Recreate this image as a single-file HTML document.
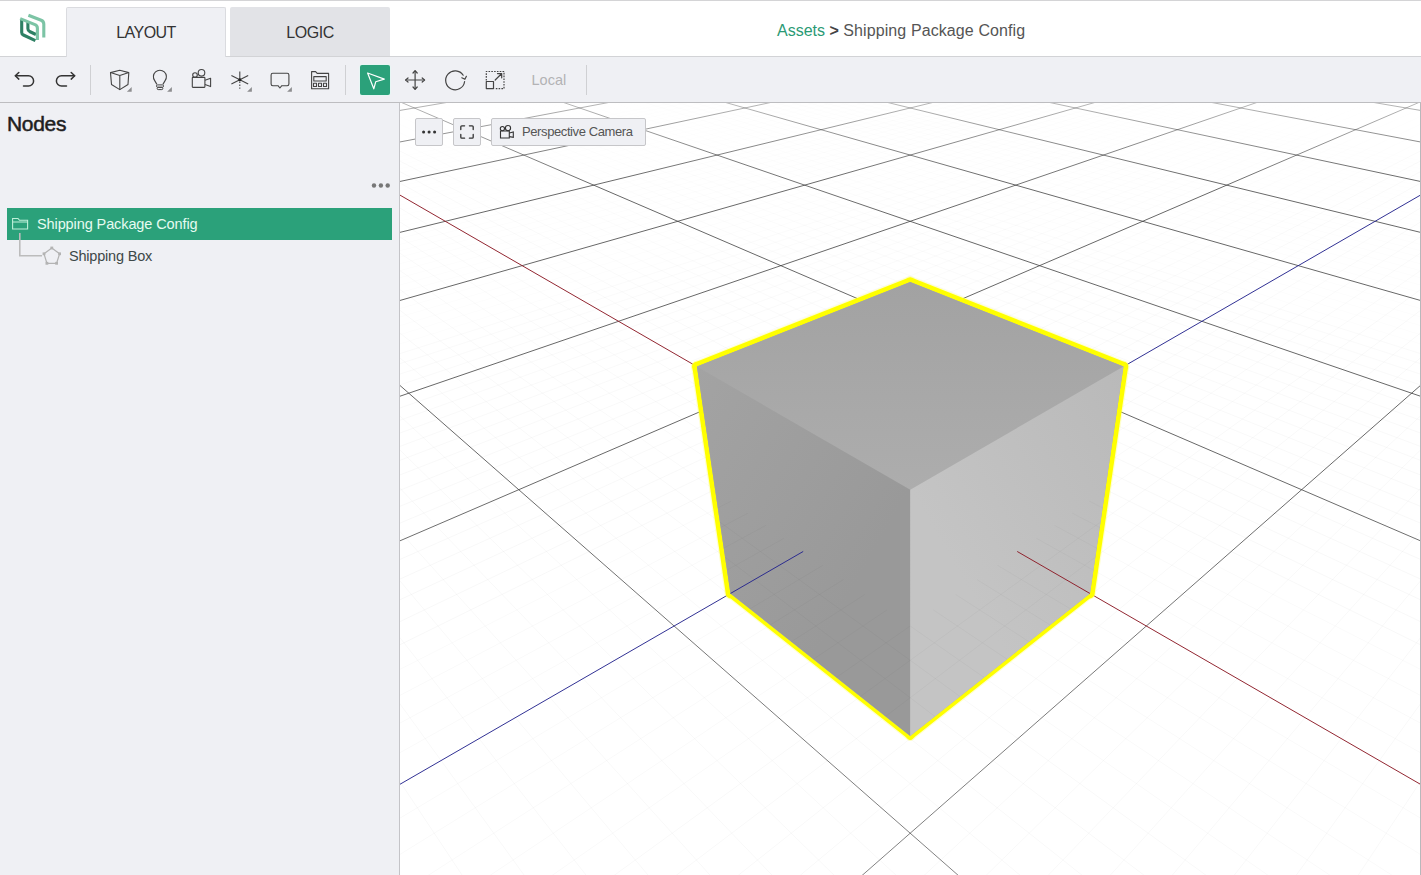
<!DOCTYPE html>
<html><head><meta charset="utf-8">
<style>
*{box-sizing:border-box;margin:0;padding:0}
html,body{width:1421px;height:875px;overflow:hidden;background:#fff;font-family:"Liberation Sans",sans-serif}
.abs{position:absolute}
#header{position:absolute;left:0;top:0;width:1421px;height:57px;background:#fff;border-top:1px solid #d4d4d6}
#toolbar{position:absolute;left:0;top:56px;width:1421px;height:47px;background:#eff0f4;border-top:1px solid #d2d3d6;border-bottom:1px solid #bdbdc0}
.tab{position:absolute;top:6px;height:50px;font-size:16px;color:#333;text-align:center;line-height:50px;border-radius:2px 2px 0 0}
#tab1{left:66px;width:160px;background:#eff0f4;border:1px solid #dadbdf;border-bottom:none;z-index:2}
#tab2{left:230px;width:160px;height:49px;background:#e2e3e7}
.crumb{position:absolute;top:21px;font-size:16px;white-space:nowrap}
#left{position:absolute;left:0;top:103px;width:400px;height:772px;background:#eff0f4;border-right:1px solid #c4c4c8}
#view{position:absolute;left:400px;top:103px;width:1021px;height:772px;background:#fff;overflow:hidden}
#vborder{position:absolute;left:1420px;top:103px;width:1px;height:772px;background:#b8b8bb}
.sep{position:absolute;top:65px;width:1px;height:30px;background:#cfd0d3}
.vbtn{position:absolute;top:15px;height:28px;background:#eff0f4;border:1px solid #c6c6c9;border-radius:2px}
svg{overflow:visible}
</style></head><body>
<div id="header">
  <svg class="abs" style="left:0;top:0" width="60" height="56" viewBox="0 0 60 56">
    <g fill="none" stroke-width="3.1" stroke-linejoin="round" stroke-linecap="butt">
      <path d="M21.7 19 L21.7 31.4 Q21.7 33.2 23.4 34 L35.4 39.6" stroke="#2e8064"/>
      <path d="M27.9 20.4 L27.9 27.8 Q27.9 29.6 29.6 30.5 L35.9 33.5" stroke="#2e8064"/>
      <path d="M28.4 14.2 L41.2 19.3 Q43.8 20.3 43.8 23 L43.8 36.4" stroke="#7cc4a5"/>
      <path d="M20.2 17.6 L35 23.6 Q37.4 24.6 37.4 27.2 L37.4 39" stroke="#7cc4a5"/>
    </g>
  </svg>
  <div id="tab1" class="tab" style="letter-spacing:-0.55px;line-height:50px">LAYOUT</div>
  <div id="tab2" class="tab" style="letter-spacing:-0.45px;line-height:51px">LOGIC</div>
  <div class="crumb" style="left:777px"><span style="color:#2a9a74">Assets</span> <b style="color:#444">&gt;</b> <span style="color:#555;letter-spacing:0.1px">Shipping Package Config</span></div>
</div>
<div id="toolbar"></div>
<!-- toolbar icons -->
<svg class="abs" style="left:0;top:56px" width="600" height="47" viewBox="0 56 600 47">
  <g fill="none" stroke="#333" stroke-width="1.5" stroke-linecap="round" stroke-linejoin="round">
    <!-- undo -->
    <path d="M15.5 75.8 H28.5 A5.1 5.1 0 0 1 28.5 86 H23.5"/>
    <path d="M18.8 72.5 L15.3 75.8 L18.8 79.1"/>
    <!-- redo -->
    <path d="M74.5 75.8 H61.5 A5.1 5.1 0 0 0 61.5 86 H66.5"/>
    <path d="M71.2 72.5 L74.7 75.8 L71.2 79.1"/>
  </g>
  <rect x="90" y="65" width="1" height="30" fill="#cfd0d3"/>
  <g fill="none" stroke="#444" stroke-width="1.1" stroke-linejoin="round">
    <!-- cube -->
    <path d="M110.5 72.6 L119.8 70.3 L128.8 72.6 L128 84.5 L119.8 89.6 L111.5 84.5 Z"/>
    <path d="M110.5 72.6 L119.8 75.6 L128.8 72.6 M119.8 75.6 L119.8 89.6"/>
    <!-- bulb -->
    <path d="M156.9 84.4 L154.7 80.6 A6.5 6.5 0 1 1 165.1 80.6 L162.9 84.4"/>
    <rect x="156.5" y="84.9" width="7" height="2.3" rx="1" stroke-width="1"/>
    <rect x="157.2" y="87.4" width="5.6" height="2.2" rx="1" stroke-width="1"/>
    <!-- camera -->
    <rect x="192.3" y="77.4" width="12.6" height="10" rx="0.6"/>
    <path d="M205 80.2 L210.6 78.2 L210.6 86.6 L205 84.6"/>
    <circle cx="195" cy="75" r="2.3"/>
    <circle cx="201.5" cy="72.8" r="3.3"/>
    <!-- light star -->
    <path d="M239.8 71.4 V79.7 M231.4 75.5 L248.2 84 M231.4 84 L248.2 75.5"/>
    <path d="M239.8 81.5 V88.8" stroke-dasharray="1.6 1.4"/>
    <!-- speech -->
    <path d="M272.8 73.2 H287.2 Q288.9 73.2 288.9 75 V84 Q288.9 85.7 287.2 85.7 H281.8 L279.9 88 L278 85.7 H272.8 Q271.1 85.7 271.1 84 V75 Q271.1 73.2 272.8 73.2 Z"/>
    <!-- film -->
    <path d="M311.6 88.7 V71.6 H315.6 L317.2 73.4 H328.6 V88.7 Z"/>
    <rect x="313.8" y="76.6" width="12.4" height="4.4"/>
    <rect x="313.5" y="83.3" width="3" height="3.2"/>
    <rect x="318.5" y="83.3" width="3" height="3.2"/>
    <rect x="323.5" y="83.3" width="3" height="3.2"/>
  </g>
  <g fill="#8e8e90">
    <path d="M126.9 91.8 L131.7 87 L131.7 91.8 Z"/>
    <path d="M167.1 91.8 L171.9 87 L171.9 91.8 Z"/>
    <path d="M247.1 91.8 L251.9 87 L251.9 91.8 Z"/>
    <path d="M287.1 91.8 L291.9 87 L291.9 91.8 Z"/>
  </g>
  <circle cx="239.8" cy="79.7" r="1.5" fill="#222"/>
  <rect x="345" y="65" width="1" height="30" fill="#cfd0d3"/>
  <!-- select button -->
  <rect x="359.5" y="64.5" width="31" height="31" rx="2.5" fill="#dffcf3"/>
  <rect x="360" y="65" width="30" height="30" rx="2" fill="#2ba17a"/>
  <path d="M367.6 73 L384.3 79.1 L375.7 81.8 L373.8 88.8 Z" fill="none" stroke="#fff" stroke-width="1.2" stroke-linejoin="round"/>
  <g fill="none" stroke="#444" stroke-width="1.2" stroke-linejoin="round" stroke-linecap="round">
    <!-- move -->
    <path d="M415.1 71 V89 M406 80 H424.2"/>
    <path d="M413 73 L415.1 70.6 L417.2 73 M413 87 L415.1 89.4 L417.2 87 M408 78 L405.6 80 L408 82 M422.2 78 L424.6 80 L422.2 82"/>
    <!-- rotate -->
    <path d="M463.2 75.2 A9.5 9.5 0 1 0 464.6 81.5"/>
    <path d="M461.8 77.8 L464.9 79.3 L466.4 76.3"/>
    <!-- scale -->
    <path d="M486.3 80.5 V71.5 H504 V88.6 H494.5" stroke-dasharray="1.6 1.2" stroke-linecap="butt"/>
    <rect x="486.3" y="81.5" width="7.2" height="7.1"/>
    <path d="M495.2 80 L501.5 73.8 M497.5 73.6 H501.7 V77.8"/>
  </g>
  <text x="531.5" y="85.3" font-family="Liberation Sans" font-size="14.5" fill="#b3b3b5">Local</text>
  <rect x="586" y="65" width="1" height="30" fill="#cfd0d3"/>
</svg>
<div id="left">
  <div class="abs" style="left:7px;top:9px;font-size:21px;color:#1e1e1e;letter-spacing:-0.3px;-webkit-text-stroke:0.5px #1e1e1e">Nodes</div>
  <svg class="abs" style="left:360px;top:76px" width="40" height="20">
    <circle cx="14" cy="6.5" r="2.2" fill="#777"/><circle cx="20.9" cy="6.5" r="2.2" fill="#777"/><circle cx="27.7" cy="6.5" r="2.2" fill="#777"/>
  </svg>
  <div class="abs" style="left:7px;top:105px;width:385px;height:32px;background:#2ba17a"></div>
  <div class="abs" style="left:37px;top:113px;font-size:14.5px;color:#e6fbf1;white-space:nowrap;letter-spacing:-0.1px">Shipping Package Config</div>
  <div class="abs" style="left:69px;top:145px;font-size:14.5px;color:#3d4848;white-space:nowrap;letter-spacing:-0.2px">Shipping Box</div>
  <svg class="abs" style="left:0;top:0" width="400" height="200" viewBox="0 103 400 200">
    <g fill="none" stroke="#bff0d9" stroke-width="1.1">
      <path d="M12.6 229 V218.5 H18 L19.5 220.3 H27.6 V229 Z M12.6 222 H27.6"/>
    </g>
    <path d="M19.8 233 V255.7 H42" fill="none" stroke="#bcbcbc" stroke-width="1.6"/>
    <g fill="none" stroke="#b3b3b3" stroke-width="1.2">
      <path d="M51.8 248 L59.6 253.8 L56.6 263.3 L46.9 263.3 L44 253.8 Z"/>
    </g>
    <g fill="#b3b3b3">
      <rect x="50.4" y="246.6" width="2.8" height="2.8"/><rect x="58.2" y="252.4" width="2.8" height="2.8"/>
      <rect x="55.2" y="261.9" width="2.8" height="2.8"/><rect x="45.5" y="261.9" width="2.8" height="2.8"/>
      <rect x="42.6" y="252.4" width="2.8" height="2.8"/>
    </g>
  </svg>
</div>
<div id="view">
<svg width="1020" height="772" viewBox="0 0 1020 772" style="position:absolute;left:0;top:0;display:block"><defs><linearGradient id="g1" gradientUnits="userSpaceOnUse" x1="806.12" y1="-5.00" x2="-5.00" y2="252.18"><stop offset="0.000" stop-color="#000" stop-opacity="0.002"/><stop offset="0.200" stop-color="#000" stop-opacity="0.008"/><stop offset="0.400" stop-color="#000" stop-opacity="0.013"/><stop offset="0.600" stop-color="#000" stop-opacity="0.017"/><stop offset="0.800" stop-color="#000" stop-opacity="0.019"/><stop offset="1.000" stop-color="#000" stop-opacity="0.022"/></linearGradient><linearGradient id="g2" gradientUnits="userSpaceOnUse" x1="214.28" y1="-5.00" x2="1025.00" y2="252.05"><stop offset="0.000" stop-color="#000" stop-opacity="0.002"/><stop offset="0.200" stop-color="#000" stop-opacity="0.008"/><stop offset="0.400" stop-color="#000" stop-opacity="0.013"/><stop offset="0.600" stop-color="#000" stop-opacity="0.017"/><stop offset="0.800" stop-color="#000" stop-opacity="0.019"/><stop offset="1.000" stop-color="#000" stop-opacity="0.022"/></linearGradient><linearGradient id="g3" gradientUnits="userSpaceOnUse" x1="822.06" y1="-5.00" x2="-5.00" y2="262.25"><stop offset="0.000" stop-color="#000" stop-opacity="0.002"/><stop offset="0.200" stop-color="#000" stop-opacity="0.008"/><stop offset="0.400" stop-color="#000" stop-opacity="0.013"/><stop offset="0.600" stop-color="#000" stop-opacity="0.017"/><stop offset="0.800" stop-color="#000" stop-opacity="0.020"/><stop offset="1.000" stop-color="#000" stop-opacity="0.022"/></linearGradient><linearGradient id="g4" gradientUnits="userSpaceOnUse" x1="198.34" y1="-5.00" x2="1025.00" y2="262.12"><stop offset="0.000" stop-color="#000" stop-opacity="0.002"/><stop offset="0.200" stop-color="#000" stop-opacity="0.008"/><stop offset="0.400" stop-color="#000" stop-opacity="0.013"/><stop offset="0.600" stop-color="#000" stop-opacity="0.017"/><stop offset="0.800" stop-color="#000" stop-opacity="0.020"/><stop offset="1.000" stop-color="#000" stop-opacity="0.022"/></linearGradient><linearGradient id="g5" gradientUnits="userSpaceOnUse" x1="838.00" y1="-5.00" x2="-5.00" y2="272.72"><stop offset="0.000" stop-color="#000" stop-opacity="0.002"/><stop offset="0.200" stop-color="#000" stop-opacity="0.009"/><stop offset="0.400" stop-color="#000" stop-opacity="0.014"/><stop offset="0.600" stop-color="#000" stop-opacity="0.017"/><stop offset="0.800" stop-color="#000" stop-opacity="0.020"/><stop offset="1.000" stop-color="#000" stop-opacity="0.023"/></linearGradient><linearGradient id="g6" gradientUnits="userSpaceOnUse" x1="182.40" y1="-5.00" x2="1025.00" y2="272.59"><stop offset="0.000" stop-color="#000" stop-opacity="0.002"/><stop offset="0.200" stop-color="#000" stop-opacity="0.009"/><stop offset="0.400" stop-color="#000" stop-opacity="0.014"/><stop offset="0.600" stop-color="#000" stop-opacity="0.017"/><stop offset="0.800" stop-color="#000" stop-opacity="0.020"/><stop offset="1.000" stop-color="#000" stop-opacity="0.023"/></linearGradient><linearGradient id="g7" gradientUnits="userSpaceOnUse" x1="853.94" y1="-5.00" x2="-5.00" y2="283.60"><stop offset="0.000" stop-color="#000" stop-opacity="0.002"/><stop offset="0.200" stop-color="#000" stop-opacity="0.009"/><stop offset="0.400" stop-color="#000" stop-opacity="0.014"/><stop offset="0.600" stop-color="#000" stop-opacity="0.018"/><stop offset="0.800" stop-color="#000" stop-opacity="0.021"/><stop offset="1.000" stop-color="#000" stop-opacity="0.023"/></linearGradient><linearGradient id="g8" gradientUnits="userSpaceOnUse" x1="166.46" y1="-5.00" x2="1025.00" y2="283.47"><stop offset="0.000" stop-color="#000" stop-opacity="0.002"/><stop offset="0.200" stop-color="#000" stop-opacity="0.009"/><stop offset="0.400" stop-color="#000" stop-opacity="0.014"/><stop offset="0.600" stop-color="#000" stop-opacity="0.018"/><stop offset="0.800" stop-color="#000" stop-opacity="0.021"/><stop offset="1.000" stop-color="#000" stop-opacity="0.023"/></linearGradient><linearGradient id="g9" gradientUnits="userSpaceOnUse" x1="885.82" y1="-5.00" x2="-5.00" y2="306.72"><stop offset="0.000" stop-color="#000" stop-opacity="0.002"/><stop offset="0.200" stop-color="#000" stop-opacity="0.009"/><stop offset="0.400" stop-color="#000" stop-opacity="0.015"/><stop offset="0.600" stop-color="#000" stop-opacity="0.019"/><stop offset="0.800" stop-color="#000" stop-opacity="0.022"/><stop offset="1.000" stop-color="#000" stop-opacity="0.024"/></linearGradient><linearGradient id="g10" gradientUnits="userSpaceOnUse" x1="134.58" y1="-5.00" x2="1025.00" y2="306.58"><stop offset="0.000" stop-color="#000" stop-opacity="0.002"/><stop offset="0.200" stop-color="#000" stop-opacity="0.009"/><stop offset="0.400" stop-color="#000" stop-opacity="0.015"/><stop offset="0.600" stop-color="#000" stop-opacity="0.019"/><stop offset="0.800" stop-color="#000" stop-opacity="0.022"/><stop offset="1.000" stop-color="#000" stop-opacity="0.024"/></linearGradient><linearGradient id="g11" gradientUnits="userSpaceOnUse" x1="901.75" y1="-5.00" x2="-5.00" y2="319.02"><stop offset="0.000" stop-color="#000" stop-opacity="0.002"/><stop offset="0.200" stop-color="#000" stop-opacity="0.010"/><stop offset="0.400" stop-color="#000" stop-opacity="0.015"/><stop offset="0.600" stop-color="#000" stop-opacity="0.019"/><stop offset="0.800" stop-color="#000" stop-opacity="0.022"/><stop offset="1.000" stop-color="#000" stop-opacity="0.024"/></linearGradient><linearGradient id="g12" gradientUnits="userSpaceOnUse" x1="118.65" y1="-5.00" x2="1025.00" y2="318.87"><stop offset="0.000" stop-color="#000" stop-opacity="0.002"/><stop offset="0.200" stop-color="#000" stop-opacity="0.010"/><stop offset="0.400" stop-color="#000" stop-opacity="0.015"/><stop offset="0.600" stop-color="#000" stop-opacity="0.019"/><stop offset="0.800" stop-color="#000" stop-opacity="0.022"/><stop offset="1.000" stop-color="#000" stop-opacity="0.024"/></linearGradient><linearGradient id="g13" gradientUnits="userSpaceOnUse" x1="917.69" y1="-5.00" x2="-5.00" y2="331.84"><stop offset="0.000" stop-color="#000" stop-opacity="0.002"/><stop offset="0.200" stop-color="#000" stop-opacity="0.010"/><stop offset="0.400" stop-color="#000" stop-opacity="0.015"/><stop offset="0.600" stop-color="#000" stop-opacity="0.019"/><stop offset="0.800" stop-color="#000" stop-opacity="0.022"/><stop offset="1.000" stop-color="#000" stop-opacity="0.025"/></linearGradient><linearGradient id="g14" gradientUnits="userSpaceOnUse" x1="102.71" y1="-5.00" x2="1025.00" y2="331.70"><stop offset="0.000" stop-color="#000" stop-opacity="0.002"/><stop offset="0.200" stop-color="#000" stop-opacity="0.010"/><stop offset="0.400" stop-color="#000" stop-opacity="0.015"/><stop offset="0.600" stop-color="#000" stop-opacity="0.019"/><stop offset="0.800" stop-color="#000" stop-opacity="0.022"/><stop offset="1.000" stop-color="#000" stop-opacity="0.025"/></linearGradient><linearGradient id="g15" gradientUnits="userSpaceOnUse" x1="933.63" y1="-5.00" x2="-5.00" y2="345.24"><stop offset="0.000" stop-color="#000" stop-opacity="0.002"/><stop offset="0.200" stop-color="#000" stop-opacity="0.010"/><stop offset="0.400" stop-color="#000" stop-opacity="0.016"/><stop offset="0.600" stop-color="#000" stop-opacity="0.020"/><stop offset="0.800" stop-color="#000" stop-opacity="0.023"/><stop offset="1.000" stop-color="#000" stop-opacity="0.025"/></linearGradient><linearGradient id="g16" gradientUnits="userSpaceOnUse" x1="86.77" y1="-5.00" x2="1025.00" y2="345.09"><stop offset="0.000" stop-color="#000" stop-opacity="0.002"/><stop offset="0.200" stop-color="#000" stop-opacity="0.010"/><stop offset="0.400" stop-color="#000" stop-opacity="0.016"/><stop offset="0.600" stop-color="#000" stop-opacity="0.020"/><stop offset="0.800" stop-color="#000" stop-opacity="0.023"/><stop offset="1.000" stop-color="#000" stop-opacity="0.025"/></linearGradient><linearGradient id="g17" gradientUnits="userSpaceOnUse" x1="949.57" y1="-5.00" x2="-5.00" y2="359.24"><stop offset="0.000" stop-color="#000" stop-opacity="0.001"/><stop offset="0.200" stop-color="#000" stop-opacity="0.010"/><stop offset="0.400" stop-color="#000" stop-opacity="0.016"/><stop offset="0.600" stop-color="#000" stop-opacity="0.020"/><stop offset="0.800" stop-color="#000" stop-opacity="0.023"/><stop offset="1.000" stop-color="#000" stop-opacity="0.025"/></linearGradient><linearGradient id="g18" gradientUnits="userSpaceOnUse" x1="70.83" y1="-5.00" x2="1025.00" y2="359.08"><stop offset="0.000" stop-color="#000" stop-opacity="0.001"/><stop offset="0.200" stop-color="#000" stop-opacity="0.010"/><stop offset="0.400" stop-color="#000" stop-opacity="0.016"/><stop offset="0.600" stop-color="#000" stop-opacity="0.020"/><stop offset="0.800" stop-color="#000" stop-opacity="0.023"/><stop offset="1.000" stop-color="#000" stop-opacity="0.025"/></linearGradient><linearGradient id="g19" gradientUnits="userSpaceOnUse" x1="965.51" y1="-5.00" x2="-5.00" y2="373.88"><stop offset="0.000" stop-color="#000" stop-opacity="0.001"/><stop offset="0.200" stop-color="#000" stop-opacity="0.011"/><stop offset="0.400" stop-color="#000" stop-opacity="0.016"/><stop offset="0.600" stop-color="#000" stop-opacity="0.021"/><stop offset="0.800" stop-color="#000" stop-opacity="0.023"/><stop offset="1.000" stop-color="#000" stop-opacity="0.026"/></linearGradient><linearGradient id="g20" gradientUnits="userSpaceOnUse" x1="54.89" y1="-5.00" x2="1025.00" y2="373.73"><stop offset="0.000" stop-color="#000" stop-opacity="0.001"/><stop offset="0.200" stop-color="#000" stop-opacity="0.011"/><stop offset="0.400" stop-color="#000" stop-opacity="0.016"/><stop offset="0.600" stop-color="#000" stop-opacity="0.021"/><stop offset="0.800" stop-color="#000" stop-opacity="0.023"/><stop offset="1.000" stop-color="#000" stop-opacity="0.026"/></linearGradient><linearGradient id="g21" gradientUnits="userSpaceOnUse" x1="981.45" y1="-5.00" x2="-5.00" y2="389.22"><stop offset="0.000" stop-color="#000" stop-opacity="0.002"/><stop offset="0.200" stop-color="#000" stop-opacity="0.011"/><stop offset="0.400" stop-color="#000" stop-opacity="0.017"/><stop offset="0.600" stop-color="#000" stop-opacity="0.021"/><stop offset="0.800" stop-color="#000" stop-opacity="0.024"/><stop offset="1.000" stop-color="#000" stop-opacity="0.026"/></linearGradient><linearGradient id="g22" gradientUnits="userSpaceOnUse" x1="38.95" y1="-5.00" x2="1025.00" y2="389.06"><stop offset="0.000" stop-color="#000" stop-opacity="0.002"/><stop offset="0.200" stop-color="#000" stop-opacity="0.011"/><stop offset="0.400" stop-color="#000" stop-opacity="0.017"/><stop offset="0.600" stop-color="#000" stop-opacity="0.021"/><stop offset="0.800" stop-color="#000" stop-opacity="0.024"/><stop offset="1.000" stop-color="#000" stop-opacity="0.026"/></linearGradient><linearGradient id="g23" gradientUnits="userSpaceOnUse" x1="997.38" y1="-5.00" x2="-5.00" y2="405.31"><stop offset="0.000" stop-color="#000" stop-opacity="0.002"/><stop offset="0.200" stop-color="#000" stop-opacity="0.011"/><stop offset="0.400" stop-color="#000" stop-opacity="0.017"/><stop offset="0.600" stop-color="#000" stop-opacity="0.021"/><stop offset="0.800" stop-color="#000" stop-opacity="0.024"/><stop offset="1.000" stop-color="#000" stop-opacity="0.027"/></linearGradient><linearGradient id="g24" gradientUnits="userSpaceOnUse" x1="23.02" y1="-5.00" x2="1025.00" y2="405.14"><stop offset="0.000" stop-color="#000" stop-opacity="0.002"/><stop offset="0.200" stop-color="#000" stop-opacity="0.011"/><stop offset="0.400" stop-color="#000" stop-opacity="0.017"/><stop offset="0.600" stop-color="#000" stop-opacity="0.021"/><stop offset="0.800" stop-color="#000" stop-opacity="0.024"/><stop offset="1.000" stop-color="#000" stop-opacity="0.027"/></linearGradient><linearGradient id="g25" gradientUnits="userSpaceOnUse" x1="1013.32" y1="-5.00" x2="-5.00" y2="422.19"><stop offset="0.000" stop-color="#000" stop-opacity="0.002"/><stop offset="0.200" stop-color="#000" stop-opacity="0.012"/><stop offset="0.400" stop-color="#000" stop-opacity="0.018"/><stop offset="0.600" stop-color="#000" stop-opacity="0.022"/><stop offset="0.800" stop-color="#000" stop-opacity="0.025"/><stop offset="1.000" stop-color="#000" stop-opacity="0.027"/></linearGradient><linearGradient id="g26" gradientUnits="userSpaceOnUse" x1="7.08" y1="-5.00" x2="1025.00" y2="422.02"><stop offset="0.000" stop-color="#000" stop-opacity="0.002"/><stop offset="0.200" stop-color="#000" stop-opacity="0.012"/><stop offset="0.400" stop-color="#000" stop-opacity="0.018"/><stop offset="0.600" stop-color="#000" stop-opacity="0.022"/><stop offset="0.800" stop-color="#000" stop-opacity="0.025"/><stop offset="1.000" stop-color="#000" stop-opacity="0.027"/></linearGradient><linearGradient id="g27" gradientUnits="userSpaceOnUse" x1="1025.00" y1="3.92" x2="-5.00" y2="458.61"><stop offset="0.000" stop-color="#000" stop-opacity="0.003"/><stop offset="0.200" stop-color="#000" stop-opacity="0.013"/><stop offset="0.400" stop-color="#000" stop-opacity="0.019"/><stop offset="0.600" stop-color="#000" stop-opacity="0.023"/><stop offset="0.800" stop-color="#000" stop-opacity="0.026"/><stop offset="1.000" stop-color="#000" stop-opacity="0.028"/></linearGradient><linearGradient id="g28" gradientUnits="userSpaceOnUse" x1="-5.00" y1="3.74" x2="1025.00" y2="458.43"><stop offset="0.000" stop-color="#000" stop-opacity="0.003"/><stop offset="0.200" stop-color="#000" stop-opacity="0.013"/><stop offset="0.400" stop-color="#000" stop-opacity="0.019"/><stop offset="0.600" stop-color="#000" stop-opacity="0.023"/><stop offset="0.800" stop-color="#000" stop-opacity="0.026"/><stop offset="1.000" stop-color="#000" stop-opacity="0.028"/></linearGradient><linearGradient id="g29" gradientUnits="userSpaceOnUse" x1="1025.00" y1="11.38" x2="-5.00" y2="478.29"><stop offset="0.000" stop-color="#000" stop-opacity="0.004"/><stop offset="0.200" stop-color="#000" stop-opacity="0.014"/><stop offset="0.400" stop-color="#000" stop-opacity="0.019"/><stop offset="0.600" stop-color="#000" stop-opacity="0.023"/><stop offset="0.800" stop-color="#000" stop-opacity="0.026"/><stop offset="1.000" stop-color="#000" stop-opacity="0.028"/></linearGradient><linearGradient id="g30" gradientUnits="userSpaceOnUse" x1="-5.00" y1="11.20" x2="1025.00" y2="478.10"><stop offset="0.000" stop-color="#000" stop-opacity="0.004"/><stop offset="0.200" stop-color="#000" stop-opacity="0.014"/><stop offset="0.400" stop-color="#000" stop-opacity="0.019"/><stop offset="0.600" stop-color="#000" stop-opacity="0.023"/><stop offset="0.800" stop-color="#000" stop-opacity="0.026"/><stop offset="1.000" stop-color="#000" stop-opacity="0.028"/></linearGradient><linearGradient id="g31" gradientUnits="userSpaceOnUse" x1="1025.00" y1="19.26" x2="-5.00" y2="499.05"><stop offset="0.000" stop-color="#000" stop-opacity="0.005"/><stop offset="0.200" stop-color="#000" stop-opacity="0.014"/><stop offset="0.400" stop-color="#000" stop-opacity="0.020"/><stop offset="0.600" stop-color="#000" stop-opacity="0.024"/><stop offset="0.800" stop-color="#000" stop-opacity="0.027"/><stop offset="1.000" stop-color="#000" stop-opacity="0.028"/></linearGradient><linearGradient id="g32" gradientUnits="userSpaceOnUse" x1="-5.00" y1="19.07" x2="1025.00" y2="498.86"><stop offset="0.000" stop-color="#000" stop-opacity="0.005"/><stop offset="0.200" stop-color="#000" stop-opacity="0.014"/><stop offset="0.400" stop-color="#000" stop-opacity="0.020"/><stop offset="0.600" stop-color="#000" stop-opacity="0.024"/><stop offset="0.800" stop-color="#000" stop-opacity="0.027"/><stop offset="1.000" stop-color="#000" stop-opacity="0.028"/></linearGradient><linearGradient id="g33" gradientUnits="userSpaceOnUse" x1="1025.00" y1="27.58" x2="-5.00" y2="520.99"><stop offset="0.000" stop-color="#000" stop-opacity="0.006"/><stop offset="0.200" stop-color="#000" stop-opacity="0.015"/><stop offset="0.400" stop-color="#000" stop-opacity="0.021"/><stop offset="0.600" stop-color="#000" stop-opacity="0.024"/><stop offset="0.800" stop-color="#000" stop-opacity="0.027"/><stop offset="1.000" stop-color="#000" stop-opacity="0.028"/></linearGradient><linearGradient id="g34" gradientUnits="userSpaceOnUse" x1="-5.00" y1="27.39" x2="1025.00" y2="520.80"><stop offset="0.000" stop-color="#000" stop-opacity="0.006"/><stop offset="0.200" stop-color="#000" stop-opacity="0.015"/><stop offset="0.400" stop-color="#000" stop-opacity="0.021"/><stop offset="0.600" stop-color="#000" stop-opacity="0.024"/><stop offset="0.800" stop-color="#000" stop-opacity="0.027"/><stop offset="1.000" stop-color="#000" stop-opacity="0.028"/></linearGradient><linearGradient id="g35" gradientUnits="userSpaceOnUse" x1="1025.00" y1="36.39" x2="-5.00" y2="544.21"><stop offset="0.000" stop-color="#000" stop-opacity="0.007"/><stop offset="0.200" stop-color="#000" stop-opacity="0.016"/><stop offset="0.400" stop-color="#000" stop-opacity="0.021"/><stop offset="0.600" stop-color="#000" stop-opacity="0.025"/><stop offset="0.800" stop-color="#000" stop-opacity="0.027"/><stop offset="1.000" stop-color="#000" stop-opacity="0.028"/></linearGradient><linearGradient id="g36" gradientUnits="userSpaceOnUse" x1="-5.00" y1="36.19" x2="1025.00" y2="544.01"><stop offset="0.000" stop-color="#000" stop-opacity="0.007"/><stop offset="0.200" stop-color="#000" stop-opacity="0.016"/><stop offset="0.400" stop-color="#000" stop-opacity="0.021"/><stop offset="0.600" stop-color="#000" stop-opacity="0.025"/><stop offset="0.800" stop-color="#000" stop-opacity="0.027"/><stop offset="1.000" stop-color="#000" stop-opacity="0.028"/></linearGradient><linearGradient id="g37" gradientUnits="userSpaceOnUse" x1="72.96" y1="-5.00" x2="-5.00" y2="8.26"><stop offset="0.000" stop-color="#3a3a3a" stop-opacity="0.330"/><stop offset="0.200" stop-color="#3a3a3a" stop-opacity="0.349"/><stop offset="0.400" stop-color="#3a3a3a" stop-opacity="0.368"/><stop offset="0.600" stop-color="#3a3a3a" stop-opacity="0.387"/><stop offset="0.800" stop-color="#3a3a3a" stop-opacity="0.400"/><stop offset="1.000" stop-color="#3a3a3a" stop-opacity="0.419"/></linearGradient><linearGradient id="g38" gradientUnits="userSpaceOnUse" x1="947.44" y1="-5.00" x2="1025.00" y2="8.19"><stop offset="0.000" stop-color="#3a3a3a" stop-opacity="0.330"/><stop offset="0.200" stop-color="#3a3a3a" stop-opacity="0.349"/><stop offset="0.400" stop-color="#3a3a3a" stop-opacity="0.368"/><stop offset="0.600" stop-color="#3a3a3a" stop-opacity="0.381"/><stop offset="0.800" stop-color="#3a3a3a" stop-opacity="0.400"/><stop offset="1.000" stop-color="#3a3a3a" stop-opacity="0.419"/></linearGradient><linearGradient id="g39" gradientUnits="userSpaceOnUse" x1="232.34" y1="-5.00" x2="-5.00" y2="39.89"><stop offset="0.000" stop-color="#3a3a3a" stop-opacity="0.330"/><stop offset="0.200" stop-color="#3a3a3a" stop-opacity="0.393"/><stop offset="0.400" stop-color="#3a3a3a" stop-opacity="0.444"/><stop offset="0.600" stop-color="#3a3a3a" stop-opacity="0.495"/><stop offset="0.800" stop-color="#3a3a3a" stop-opacity="0.546"/><stop offset="1.000" stop-color="#3a3a3a" stop-opacity="0.591"/></linearGradient><linearGradient id="g40" gradientUnits="userSpaceOnUse" x1="788.06" y1="-5.00" x2="1025.00" y2="39.82"><stop offset="0.000" stop-color="#3a3a3a" stop-opacity="0.330"/><stop offset="0.200" stop-color="#3a3a3a" stop-opacity="0.393"/><stop offset="0.400" stop-color="#3a3a3a" stop-opacity="0.444"/><stop offset="0.600" stop-color="#3a3a3a" stop-opacity="0.495"/><stop offset="0.800" stop-color="#3a3a3a" stop-opacity="0.546"/><stop offset="1.000" stop-color="#3a3a3a" stop-opacity="0.591"/></linearGradient><linearGradient id="g41" gradientUnits="userSpaceOnUse" x1="391.73" y1="-5.00" x2="-5.00" y2="79.51"><stop offset="0.000" stop-color="#3a3a3a" stop-opacity="0.329"/><stop offset="0.200" stop-color="#3a3a3a" stop-opacity="0.438"/><stop offset="0.400" stop-color="#3a3a3a" stop-opacity="0.533"/><stop offset="0.600" stop-color="#3a3a3a" stop-opacity="0.622"/><stop offset="0.800" stop-color="#3a3a3a" stop-opacity="0.699"/><stop offset="1.000" stop-color="#3a3a3a" stop-opacity="0.769"/></linearGradient><linearGradient id="g42" gradientUnits="userSpaceOnUse" x1="628.67" y1="-5.00" x2="1025.00" y2="79.43"><stop offset="0.000" stop-color="#3a3a3a" stop-opacity="0.329"/><stop offset="0.200" stop-color="#3a3a3a" stop-opacity="0.438"/><stop offset="0.400" stop-color="#3a3a3a" stop-opacity="0.533"/><stop offset="0.600" stop-color="#3a3a3a" stop-opacity="0.622"/><stop offset="0.800" stop-color="#3a3a3a" stop-opacity="0.699"/><stop offset="1.000" stop-color="#3a3a3a" stop-opacity="0.769"/></linearGradient><linearGradient id="g43" gradientUnits="userSpaceOnUse" x1="551.11" y1="-5.00" x2="-5.00" y2="130.57"><stop offset="0.000" stop-color="#3a3a3a" stop-opacity="0.330"/><stop offset="0.200" stop-color="#3a3a3a" stop-opacity="0.499"/><stop offset="0.400" stop-color="#3a3a3a" stop-opacity="0.637"/><stop offset="0.600" stop-color="#3a3a3a" stop-opacity="0.756"/><stop offset="0.800" stop-color="#3a3a3a" stop-opacity="0.770"/><stop offset="1.000" stop-color="#3a3a3a" stop-opacity="0.770"/></linearGradient><linearGradient id="g44" gradientUnits="userSpaceOnUse" x1="469.29" y1="-5.00" x2="1025.00" y2="130.48"><stop offset="0.000" stop-color="#3a3a3a" stop-opacity="0.330"/><stop offset="0.200" stop-color="#3a3a3a" stop-opacity="0.499"/><stop offset="0.400" stop-color="#3a3a3a" stop-opacity="0.637"/><stop offset="0.600" stop-color="#3a3a3a" stop-opacity="0.756"/><stop offset="0.800" stop-color="#3a3a3a" stop-opacity="0.770"/><stop offset="1.000" stop-color="#3a3a3a" stop-opacity="0.770"/></linearGradient><linearGradient id="g45" gradientUnits="userSpaceOnUse" x1="710.49" y1="-5.00" x2="-5.00" y2="198.88"><stop offset="0.000" stop-color="#3a3a3a" stop-opacity="0.333"/><stop offset="0.200" stop-color="#3a3a3a" stop-opacity="0.571"/><stop offset="0.400" stop-color="#3a3a3a" stop-opacity="0.755"/><stop offset="0.600" stop-color="#3a3a3a" stop-opacity="0.770"/><stop offset="0.800" stop-color="#3a3a3a" stop-opacity="0.770"/><stop offset="1.000" stop-color="#3a3a3a" stop-opacity="0.770"/></linearGradient><linearGradient id="g46" gradientUnits="userSpaceOnUse" x1="309.91" y1="-5.00" x2="1025.00" y2="198.76"><stop offset="0.000" stop-color="#3a3a3a" stop-opacity="0.333"/><stop offset="0.200" stop-color="#3a3a3a" stop-opacity="0.571"/><stop offset="0.400" stop-color="#3a3a3a" stop-opacity="0.755"/><stop offset="0.600" stop-color="#3a3a3a" stop-opacity="0.770"/><stop offset="0.800" stop-color="#3a3a3a" stop-opacity="0.770"/><stop offset="1.000" stop-color="#3a3a3a" stop-opacity="0.770"/></linearGradient><linearGradient id="g47" gradientUnits="userSpaceOnUse" x1="869.88" y1="-5.00" x2="-5.00" y2="294.93"><stop offset="0.000" stop-color="#3a3a3a" stop-opacity="0.334"/><stop offset="0.200" stop-color="#3a3a3a" stop-opacity="0.666"/><stop offset="0.400" stop-color="#3a3a3a" stop-opacity="0.770"/><stop offset="0.600" stop-color="#3a3a3a" stop-opacity="0.770"/><stop offset="0.800" stop-color="#3a3a3a" stop-opacity="0.770"/><stop offset="1.000" stop-color="#3a3a3a" stop-opacity="0.770"/></linearGradient><linearGradient id="g48" gradientUnits="userSpaceOnUse" x1="150.52" y1="-5.00" x2="1025.00" y2="294.79"><stop offset="0.000" stop-color="#3a3a3a" stop-opacity="0.334"/><stop offset="0.200" stop-color="#3a3a3a" stop-opacity="0.666"/><stop offset="0.400" stop-color="#3a3a3a" stop-opacity="0.770"/><stop offset="0.600" stop-color="#3a3a3a" stop-opacity="0.770"/><stop offset="0.800" stop-color="#3a3a3a" stop-opacity="0.770"/><stop offset="1.000" stop-color="#3a3a3a" stop-opacity="0.770"/></linearGradient><linearGradient id="g49" gradientUnits="userSpaceOnUse" x1="1025.00" y1="-3.17" x2="-5.00" y2="439.94"><stop offset="0.000" stop-color="#3a3a3a" stop-opacity="0.345"/><stop offset="0.200" stop-color="#3a3a3a" stop-opacity="0.770"/><stop offset="0.400" stop-color="#3a3a3a" stop-opacity="0.770"/><stop offset="0.600" stop-color="#3a3a3a" stop-opacity="0.770"/><stop offset="0.800" stop-color="#3a3a3a" stop-opacity="0.770"/><stop offset="1.000" stop-color="#3a3a3a" stop-opacity="0.732"/></linearGradient><linearGradient id="g50" gradientUnits="userSpaceOnUse" x1="-5.00" y1="-3.34" x2="1025.00" y2="439.77"><stop offset="0.000" stop-color="#3a3a3a" stop-opacity="0.345"/><stop offset="0.200" stop-color="#3a3a3a" stop-opacity="0.770"/><stop offset="0.400" stop-color="#3a3a3a" stop-opacity="0.770"/><stop offset="0.600" stop-color="#3a3a3a" stop-opacity="0.770"/><stop offset="0.800" stop-color="#3a3a3a" stop-opacity="0.770"/><stop offset="1.000" stop-color="#3a3a3a" stop-opacity="0.732"/></linearGradient><linearGradient id="g51" gradientUnits="userSpaceOnUse" x1="1025.00" y1="278.46" x2="456.87" y2="777.00"><stop offset="0.000" stop-color="#3a3a3a" stop-opacity="0.770"/><stop offset="0.200" stop-color="#3a3a3a" stop-opacity="0.761"/><stop offset="0.400" stop-color="#3a3a3a" stop-opacity="0.717"/><stop offset="0.600" stop-color="#3a3a3a" stop-opacity="0.683"/><stop offset="0.800" stop-color="#3a3a3a" stop-opacity="0.655"/><stop offset="1.000" stop-color="#3a3a3a" stop-opacity="0.632"/></linearGradient><linearGradient id="g52" gradientUnits="userSpaceOnUse" x1="-5.00" y1="278.11" x2="563.53" y2="777.00"><stop offset="0.000" stop-color="#3a3a3a" stop-opacity="0.770"/><stop offset="0.200" stop-color="#3a3a3a" stop-opacity="0.761"/><stop offset="0.400" stop-color="#3a3a3a" stop-opacity="0.717"/><stop offset="0.600" stop-color="#3a3a3a" stop-opacity="0.683"/><stop offset="0.800" stop-color="#3a3a3a" stop-opacity="0.655"/><stop offset="1.000" stop-color="#3a3a3a" stop-opacity="0.632"/></linearGradient><linearGradient id="g53" gradientUnits="userSpaceOnUse" x1="239.74" y1="334.65" x2="-5.00" y2="439.94"><stop offset="0.000" stop-color="#3a3a3a" stop-opacity="0.770"/><stop offset="0.200" stop-color="#3a3a3a" stop-opacity="0.770"/><stop offset="0.400" stop-color="#3a3a3a" stop-opacity="0.762"/><stop offset="0.600" stop-color="#3a3a3a" stop-opacity="0.752"/><stop offset="0.800" stop-color="#3a3a3a" stop-opacity="0.742"/><stop offset="1.000" stop-color="#3a3a3a" stop-opacity="0.733"/></linearGradient><linearGradient id="g54" gradientUnits="userSpaceOnUse" x1="780.66" y1="334.65" x2="1025.00" y2="439.77"><stop offset="0.000" stop-color="#3a3a3a" stop-opacity="0.770"/><stop offset="0.200" stop-color="#3a3a3a" stop-opacity="0.770"/><stop offset="0.400" stop-color="#3a3a3a" stop-opacity="0.762"/><stop offset="0.600" stop-color="#3a3a3a" stop-opacity="0.752"/><stop offset="0.800" stop-color="#3a3a3a" stop-opacity="0.742"/><stop offset="1.000" stop-color="#3a3a3a" stop-opacity="0.733"/></linearGradient><linearGradient id="g55" gradientUnits="userSpaceOnUse" x1="1025.00" y1="278.46" x2="456.87" y2="777.00"><stop offset="0.000" stop-color="#3a3a3a" stop-opacity="0.770"/><stop offset="0.200" stop-color="#3a3a3a" stop-opacity="0.761"/><stop offset="0.400" stop-color="#3a3a3a" stop-opacity="0.717"/><stop offset="0.600" stop-color="#3a3a3a" stop-opacity="0.683"/><stop offset="0.800" stop-color="#3a3a3a" stop-opacity="0.655"/><stop offset="1.000" stop-color="#3a3a3a" stop-opacity="0.632"/></linearGradient><linearGradient id="g56" gradientUnits="userSpaceOnUse" x1="-5.00" y1="278.11" x2="563.53" y2="777.00"><stop offset="0.000" stop-color="#3a3a3a" stop-opacity="0.770"/><stop offset="0.200" stop-color="#3a3a3a" stop-opacity="0.761"/><stop offset="0.400" stop-color="#3a3a3a" stop-opacity="0.717"/><stop offset="0.600" stop-color="#3a3a3a" stop-opacity="0.683"/><stop offset="0.800" stop-color="#3a3a3a" stop-opacity="0.655"/><stop offset="1.000" stop-color="#3a3a3a" stop-opacity="0.632"/></linearGradient><linearGradient id="ftop" gradientUnits="userSpaceOnUse" x1="510.2" y1="179.1" x2="510.2" y2="386.7"><stop offset="0" stop-color="#a2a2a2"/><stop offset="1" stop-color="#adadad"/></linearGradient><linearGradient id="fleft" gradientUnits="userSpaceOnUse" x1="296.9" y1="263.6" x2="510.2" y2="386.7"><stop offset="0" stop-color="#a3a3a3"/><stop offset="1" stop-color="#999999"/></linearGradient><linearGradient id="fright" gradientUnits="userSpaceOnUse" x1="510.2" y1="386.7" x2="723.5" y2="263.6"><stop offset="0" stop-color="#c4c4c4"/><stop offset="1" stop-color="#b9b9b9"/></linearGradient><clipPath id="silclip"><polygon points="510.20,179.11 723.48,263.56 689.97,490.49 510.20,632.97 330.43,490.49 296.92,263.56"/></clipPath></defs><rect width="1020" height="772" fill="#fff"/><line x1="104.84" y1="-5.00" x2="-5.00" y2="14.07" stroke="#000" stroke-opacity="0.003" stroke-width="1"/><line x1="915.56" y1="-5.00" x2="1025.00" y2="14.00" stroke="#000" stroke-opacity="0.003" stroke-width="1"/><line x1="120.78" y1="-5.00" x2="-5.00" y2="17.06" stroke="#000" stroke-opacity="0.003" stroke-width="1"/><line x1="899.62" y1="-5.00" x2="1025.00" y2="16.99" stroke="#000" stroke-opacity="0.003" stroke-width="1"/><line x1="136.71" y1="-5.00" x2="-5.00" y2="20.12" stroke="#000" stroke-opacity="0.003" stroke-width="1"/><line x1="883.69" y1="-5.00" x2="1025.00" y2="20.05" stroke="#000" stroke-opacity="0.003" stroke-width="1"/><line x1="152.65" y1="-5.00" x2="-5.00" y2="23.24" stroke="#000" stroke-opacity="0.004" stroke-width="1"/><line x1="867.75" y1="-5.00" x2="1025.00" y2="23.17" stroke="#000" stroke-opacity="0.004" stroke-width="1"/><line x1="168.59" y1="-5.00" x2="-5.00" y2="26.43" stroke="#000" stroke-opacity="0.004" stroke-width="1"/><line x1="851.81" y1="-5.00" x2="1025.00" y2="26.35" stroke="#000" stroke-opacity="0.004" stroke-width="1"/><line x1="184.53" y1="-5.00" x2="-5.00" y2="29.68" stroke="#000" stroke-opacity="0.004" stroke-width="1"/><line x1="835.87" y1="-5.00" x2="1025.00" y2="29.61" stroke="#000" stroke-opacity="0.004" stroke-width="1"/><line x1="200.47" y1="-5.00" x2="-5.00" y2="33.01" stroke="#000" stroke-opacity="0.004" stroke-width="1"/><line x1="819.93" y1="-5.00" x2="1025.00" y2="32.94" stroke="#000" stroke-opacity="0.004" stroke-width="1"/><line x1="216.41" y1="-5.00" x2="-5.00" y2="36.41" stroke="#000" stroke-opacity="0.004" stroke-width="1"/><line x1="803.99" y1="-5.00" x2="1025.00" y2="36.34" stroke="#000" stroke-opacity="0.004" stroke-width="1"/><line x1="248.28" y1="-5.00" x2="-5.00" y2="43.45" stroke="#000" stroke-opacity="0.005" stroke-width="1"/><line x1="772.12" y1="-5.00" x2="1025.00" y2="43.37" stroke="#000" stroke-opacity="0.005" stroke-width="1"/><line x1="264.22" y1="-5.00" x2="-5.00" y2="47.09" stroke="#000" stroke-opacity="0.005" stroke-width="1"/><line x1="756.18" y1="-5.00" x2="1025.00" y2="47.01" stroke="#000" stroke-opacity="0.005" stroke-width="1"/><line x1="280.16" y1="-5.00" x2="-5.00" y2="50.81" stroke="#000" stroke-opacity="0.005" stroke-width="1"/><line x1="740.24" y1="-5.00" x2="1025.00" y2="50.74" stroke="#000" stroke-opacity="0.005" stroke-width="1"/><line x1="296.10" y1="-5.00" x2="-5.00" y2="54.63" stroke="#000" stroke-opacity="0.006" stroke-width="1"/><line x1="724.30" y1="-5.00" x2="1025.00" y2="54.55" stroke="#000" stroke-opacity="0.005" stroke-width="1"/><line x1="312.04" y1="-5.00" x2="-5.00" y2="58.53" stroke="#000" stroke-opacity="0.006" stroke-width="1"/><line x1="708.36" y1="-5.00" x2="1025.00" y2="58.45" stroke="#000" stroke-opacity="0.006" stroke-width="1"/><line x1="327.97" y1="-5.00" x2="-5.00" y2="62.52" stroke="#000" stroke-opacity="0.006" stroke-width="1"/><line x1="692.43" y1="-5.00" x2="1025.00" y2="62.44" stroke="#000" stroke-opacity="0.006" stroke-width="1"/><line x1="343.91" y1="-5.00" x2="-5.00" y2="66.61" stroke="#000" stroke-opacity="0.006" stroke-width="1"/><line x1="676.49" y1="-5.00" x2="1025.00" y2="66.53" stroke="#000" stroke-opacity="0.006" stroke-width="1"/><line x1="359.85" y1="-5.00" x2="-5.00" y2="70.81" stroke="#000" stroke-opacity="0.006" stroke-width="1"/><line x1="660.55" y1="-5.00" x2="1025.00" y2="70.72" stroke="#000" stroke-opacity="0.006" stroke-width="1"/><line x1="375.79" y1="-5.00" x2="-5.00" y2="75.11" stroke="#000" stroke-opacity="0.007" stroke-width="1"/><line x1="644.61" y1="-5.00" x2="1025.00" y2="75.02" stroke="#000" stroke-opacity="0.007" stroke-width="1"/><line x1="407.67" y1="-5.00" x2="-5.00" y2="84.03" stroke="#000" stroke-opacity="0.007" stroke-width="1"/><line x1="612.73" y1="-5.00" x2="1025.00" y2="83.94" stroke="#000" stroke-opacity="0.007" stroke-width="1"/><line x1="423.60" y1="-5.00" x2="-5.00" y2="88.67" stroke="#000" stroke-opacity="0.007" stroke-width="1"/><line x1="596.80" y1="-5.00" x2="1025.00" y2="88.58" stroke="#000" stroke-opacity="0.007" stroke-width="1"/><line x1="439.54" y1="-5.00" x2="-5.00" y2="93.42" stroke="#000" stroke-opacity="0.008" stroke-width="1"/><line x1="580.86" y1="-5.00" x2="1025.00" y2="93.34" stroke="#000" stroke-opacity="0.008" stroke-width="1"/><line x1="455.48" y1="-5.00" x2="-5.00" y2="98.31" stroke="#000" stroke-opacity="0.008" stroke-width="1"/><line x1="564.92" y1="-5.00" x2="1025.00" y2="98.22" stroke="#000" stroke-opacity="0.008" stroke-width="1"/><line x1="471.42" y1="-5.00" x2="-5.00" y2="103.32" stroke="#000" stroke-opacity="0.008" stroke-width="1"/><line x1="548.98" y1="-5.00" x2="1025.00" y2="103.23" stroke="#000" stroke-opacity="0.008" stroke-width="1"/><line x1="487.36" y1="-5.00" x2="-5.00" y2="108.48" stroke="#000" stroke-opacity="0.008" stroke-width="1"/><line x1="533.04" y1="-5.00" x2="1025.00" y2="108.38" stroke="#000" stroke-opacity="0.008" stroke-width="1"/><line x1="503.30" y1="-5.00" x2="-5.00" y2="113.77" stroke="#000" stroke-opacity="0.009" stroke-width="1"/><line x1="517.10" y1="-5.00" x2="1025.00" y2="113.68" stroke="#000" stroke-opacity="0.009" stroke-width="1"/><line x1="519.23" y1="-5.00" x2="-5.00" y2="119.22" stroke="#000" stroke-opacity="0.009" stroke-width="1"/><line x1="501.17" y1="-5.00" x2="1025.00" y2="119.12" stroke="#000" stroke-opacity="0.009" stroke-width="1"/><line x1="535.17" y1="-5.00" x2="-5.00" y2="124.81" stroke="#000" stroke-opacity="0.009" stroke-width="1"/><line x1="485.23" y1="-5.00" x2="1025.00" y2="124.72" stroke="#000" stroke-opacity="0.009" stroke-width="1"/><line x1="567.05" y1="-5.00" x2="-5.00" y2="136.50" stroke="#000" stroke-opacity="0.010" stroke-width="1"/><line x1="453.35" y1="-5.00" x2="1025.00" y2="136.41" stroke="#000" stroke-opacity="0.010" stroke-width="1"/><line x1="582.99" y1="-5.00" x2="-5.00" y2="142.61" stroke="#000" stroke-opacity="0.010" stroke-width="1"/><line x1="437.41" y1="-5.00" x2="1025.00" y2="142.51" stroke="#000" stroke-opacity="0.010" stroke-width="1"/><line x1="598.93" y1="-5.00" x2="-5.00" y2="148.90" stroke="#000" stroke-opacity="0.010" stroke-width="1"/><line x1="421.47" y1="-5.00" x2="1025.00" y2="148.80" stroke="#000" stroke-opacity="0.010" stroke-width="1"/><line x1="614.86" y1="-5.00" x2="-5.00" y2="155.38" stroke="#000" stroke-opacity="0.010" stroke-width="1"/><line x1="405.54" y1="-5.00" x2="1025.00" y2="155.28" stroke="#000" stroke-opacity="0.010" stroke-width="1"/><line x1="630.80" y1="-5.00" x2="-5.00" y2="162.07" stroke="#000" stroke-opacity="0.011" stroke-width="1"/><line x1="389.60" y1="-5.00" x2="1025.00" y2="161.96" stroke="#000" stroke-opacity="0.011" stroke-width="1"/><line x1="646.74" y1="-5.00" x2="-5.00" y2="168.96" stroke="#000" stroke-opacity="0.011" stroke-width="1"/><line x1="373.66" y1="-5.00" x2="1025.00" y2="168.86" stroke="#000" stroke-opacity="0.011" stroke-width="1"/><line x1="662.68" y1="-5.00" x2="-5.00" y2="176.08" stroke="#000" stroke-opacity="0.011" stroke-width="1"/><line x1="357.72" y1="-5.00" x2="1025.00" y2="175.97" stroke="#000" stroke-opacity="0.011" stroke-width="1"/><line x1="678.62" y1="-5.00" x2="-5.00" y2="183.43" stroke="#000" stroke-opacity="0.011" stroke-width="1"/><line x1="341.78" y1="-5.00" x2="1025.00" y2="183.32" stroke="#000" stroke-opacity="0.011" stroke-width="1"/><line x1="694.56" y1="-5.00" x2="-5.00" y2="191.03" stroke="#000" stroke-opacity="0.012" stroke-width="1"/><line x1="325.84" y1="-5.00" x2="1025.00" y2="190.91" stroke="#000" stroke-opacity="0.012" stroke-width="1"/><line x1="726.43" y1="-5.00" x2="-5.00" y2="207.00" stroke="#000" stroke-opacity="0.012" stroke-width="1"/><line x1="293.97" y1="-5.00" x2="1025.00" y2="206.88" stroke="#000" stroke-opacity="0.012" stroke-width="1"/><line x1="742.37" y1="-5.00" x2="-5.00" y2="215.40" stroke="#000" stroke-opacity="0.012" stroke-width="1"/><line x1="278.03" y1="-5.00" x2="1025.00" y2="215.28" stroke="#000" stroke-opacity="0.012" stroke-width="1"/><line x1="758.31" y1="-5.00" x2="-5.00" y2="224.11" stroke="#000" stroke-opacity="0.013" stroke-width="1"/><line x1="262.09" y1="-5.00" x2="1025.00" y2="223.99" stroke="#000" stroke-opacity="0.013" stroke-width="1"/><line x1="774.25" y1="-5.00" x2="-5.00" y2="233.12" stroke="#000" stroke-opacity="0.013" stroke-width="1"/><line x1="246.15" y1="-5.00" x2="1025.00" y2="233.00" stroke="#000" stroke-opacity="0.013" stroke-width="1"/><line x1="790.19" y1="-5.00" x2="-5.00" y2="242.48" stroke="#000" stroke-opacity="0.013" stroke-width="1"/><line x1="230.21" y1="-5.00" x2="1025.00" y2="242.35" stroke="#000" stroke-opacity="0.013" stroke-width="1"/><line x1="806.12" y1="-5.00" x2="-5.00" y2="252.18" stroke="url(#g1)" stroke-width="1"/><line x1="214.28" y1="-5.00" x2="1025.00" y2="252.05" stroke="url(#g2)" stroke-width="1"/><line x1="822.06" y1="-5.00" x2="-5.00" y2="262.25" stroke="url(#g3)" stroke-width="1"/><line x1="198.34" y1="-5.00" x2="1025.00" y2="262.12" stroke="url(#g4)" stroke-width="1"/><line x1="838.00" y1="-5.00" x2="-5.00" y2="272.72" stroke="url(#g5)" stroke-width="1"/><line x1="182.40" y1="-5.00" x2="1025.00" y2="272.59" stroke="url(#g6)" stroke-width="1"/><line x1="853.94" y1="-5.00" x2="-5.00" y2="283.60" stroke="url(#g7)" stroke-width="1"/><line x1="166.46" y1="-5.00" x2="1025.00" y2="283.47" stroke="url(#g8)" stroke-width="1"/><line x1="885.82" y1="-5.00" x2="-5.00" y2="306.72" stroke="url(#g9)" stroke-width="1"/><line x1="134.58" y1="-5.00" x2="1025.00" y2="306.58" stroke="url(#g10)" stroke-width="1"/><line x1="901.75" y1="-5.00" x2="-5.00" y2="319.02" stroke="url(#g11)" stroke-width="1"/><line x1="118.65" y1="-5.00" x2="1025.00" y2="318.87" stroke="url(#g12)" stroke-width="1"/><line x1="917.69" y1="-5.00" x2="-5.00" y2="331.84" stroke="url(#g13)" stroke-width="1"/><line x1="102.71" y1="-5.00" x2="1025.00" y2="331.70" stroke="url(#g14)" stroke-width="1"/><line x1="933.63" y1="-5.00" x2="-5.00" y2="345.24" stroke="url(#g15)" stroke-width="1"/><line x1="86.77" y1="-5.00" x2="1025.00" y2="345.09" stroke="url(#g16)" stroke-width="1"/><line x1="949.57" y1="-5.00" x2="-5.00" y2="359.24" stroke="url(#g17)" stroke-width="1"/><line x1="70.83" y1="-5.00" x2="1025.00" y2="359.08" stroke="url(#g18)" stroke-width="1"/><line x1="965.51" y1="-5.00" x2="-5.00" y2="373.88" stroke="url(#g19)" stroke-width="1"/><line x1="54.89" y1="-5.00" x2="1025.00" y2="373.73" stroke="url(#g20)" stroke-width="1"/><line x1="981.45" y1="-5.00" x2="-5.00" y2="389.22" stroke="url(#g21)" stroke-width="1"/><line x1="38.95" y1="-5.00" x2="1025.00" y2="389.06" stroke="url(#g22)" stroke-width="1"/><line x1="997.38" y1="-5.00" x2="-5.00" y2="405.31" stroke="url(#g23)" stroke-width="1"/><line x1="23.02" y1="-5.00" x2="1025.00" y2="405.14" stroke="url(#g24)" stroke-width="1"/><line x1="1013.32" y1="-5.00" x2="-5.00" y2="422.19" stroke="url(#g25)" stroke-width="1"/><line x1="7.08" y1="-5.00" x2="1025.00" y2="422.02" stroke="url(#g26)" stroke-width="1"/><line x1="1025.00" y1="3.92" x2="-5.00" y2="458.61" stroke="url(#g27)" stroke-width="1"/><line x1="-5.00" y1="3.74" x2="1025.00" y2="458.43" stroke="url(#g28)" stroke-width="1"/><line x1="1025.00" y1="11.38" x2="-5.00" y2="478.29" stroke="url(#g29)" stroke-width="1"/><line x1="-5.00" y1="11.20" x2="1025.00" y2="478.10" stroke="url(#g30)" stroke-width="1"/><line x1="1025.00" y1="19.26" x2="-5.00" y2="499.05" stroke="url(#g31)" stroke-width="1"/><line x1="-5.00" y1="19.07" x2="1025.00" y2="498.86" stroke="url(#g32)" stroke-width="1"/><line x1="1025.00" y1="27.58" x2="-5.00" y2="520.99" stroke="url(#g33)" stroke-width="1"/><line x1="-5.00" y1="27.39" x2="1025.00" y2="520.80" stroke="url(#g34)" stroke-width="1"/><line x1="1025.00" y1="36.39" x2="-5.00" y2="544.21" stroke="url(#g35)" stroke-width="1"/><line x1="-5.00" y1="36.19" x2="1025.00" y2="544.01" stroke="url(#g36)" stroke-width="1"/><line x1="1025.00" y1="45.73" x2="-5.00" y2="568.83" stroke="#000" stroke-opacity="0.021" stroke-width="1"/><line x1="-5.00" y1="45.53" x2="1025.00" y2="568.63" stroke="#000" stroke-opacity="0.021" stroke-width="1"/><line x1="1025.00" y1="55.65" x2="-5.00" y2="594.98" stroke="#000" stroke-opacity="0.022" stroke-width="1"/><line x1="-5.00" y1="55.44" x2="1025.00" y2="594.77" stroke="#000" stroke-opacity="0.022" stroke-width="1"/><line x1="1025.00" y1="66.20" x2="-5.00" y2="622.80" stroke="#000" stroke-opacity="0.022" stroke-width="1"/><line x1="-5.00" y1="65.99" x2="1025.00" y2="622.58" stroke="#000" stroke-opacity="0.022" stroke-width="1"/><line x1="1025.00" y1="77.46" x2="-5.00" y2="652.46" stroke="#000" stroke-opacity="0.023" stroke-width="1"/><line x1="-5.00" y1="77.23" x2="1025.00" y2="652.24" stroke="#000" stroke-opacity="0.023" stroke-width="1"/><line x1="1025.00" y1="102.35" x2="-5.00" y2="718.09" stroke="#000" stroke-opacity="0.024" stroke-width="1"/><line x1="-5.00" y1="102.12" x2="1025.00" y2="717.85" stroke="#000" stroke-opacity="0.024" stroke-width="1"/><line x1="1025.00" y1="116.17" x2="-5.00" y2="754.51" stroke="#000" stroke-opacity="0.024" stroke-width="1"/><line x1="-5.00" y1="115.93" x2="1025.00" y2="754.27" stroke="#000" stroke-opacity="0.024" stroke-width="1"/><line x1="1025.00" y1="131.05" x2="20.99" y2="777.00" stroke="#000" stroke-opacity="0.025" stroke-width="1"/><line x1="-5.00" y1="130.79" x2="999.41" y2="777.00" stroke="#000" stroke-opacity="0.025" stroke-width="1"/><line x1="1025.00" y1="147.10" x2="83.25" y2="777.00" stroke="#000" stroke-opacity="0.025" stroke-width="1"/><line x1="-5.00" y1="146.83" x2="937.15" y2="777.00" stroke="#000" stroke-opacity="0.025" stroke-width="1"/><line x1="1025.00" y1="164.48" x2="145.52" y2="777.00" stroke="#000" stroke-opacity="0.025" stroke-width="1"/><line x1="-5.00" y1="164.20" x2="874.88" y2="777.00" stroke="#000" stroke-opacity="0.025" stroke-width="1"/><line x1="1025.00" y1="183.35" x2="207.79" y2="777.00" stroke="#000" stroke-opacity="0.026" stroke-width="1"/><line x1="-5.00" y1="183.06" x2="812.61" y2="777.00" stroke="#000" stroke-opacity="0.026" stroke-width="1"/><line x1="1025.00" y1="203.92" x2="270.06" y2="777.00" stroke="#000" stroke-opacity="0.026" stroke-width="1"/><line x1="-5.00" y1="203.61" x2="750.34" y2="777.00" stroke="#000" stroke-opacity="0.026" stroke-width="1"/><line x1="1025.00" y1="226.42" x2="332.33" y2="777.00" stroke="#000" stroke-opacity="0.026" stroke-width="1"/><line x1="-5.00" y1="226.11" x2="688.07" y2="777.00" stroke="#000" stroke-opacity="0.026" stroke-width="1"/><line x1="1025.00" y1="251.16" x2="394.60" y2="777.00" stroke="#000" stroke-opacity="0.026" stroke-width="1"/><line x1="-5.00" y1="250.82" x2="625.80" y2="777.00" stroke="#000" stroke-opacity="0.026" stroke-width="1"/><line x1="1025.00" y1="308.76" x2="519.13" y2="777.00" stroke="#000" stroke-opacity="0.027" stroke-width="1"/><line x1="-5.00" y1="308.39" x2="501.27" y2="777.00" stroke="#000" stroke-opacity="0.027" stroke-width="1"/><line x1="1025.00" y1="342.57" x2="581.40" y2="777.00" stroke="#000" stroke-opacity="0.027" stroke-width="1"/><line x1="-5.00" y1="342.18" x2="439.00" y2="777.00" stroke="#000" stroke-opacity="0.027" stroke-width="1"/><line x1="1025.00" y1="380.55" x2="643.67" y2="777.00" stroke="#000" stroke-opacity="0.028" stroke-width="1"/><line x1="-5.00" y1="380.13" x2="376.73" y2="777.00" stroke="#000" stroke-opacity="0.028" stroke-width="1"/><line x1="1025.00" y1="423.51" x2="705.94" y2="777.00" stroke="#000" stroke-opacity="0.028" stroke-width="1"/><line x1="-5.00" y1="423.07" x2="314.46" y2="777.00" stroke="#000" stroke-opacity="0.028" stroke-width="1"/><line x1="1025.00" y1="472.52" x2="768.21" y2="777.00" stroke="#000" stroke-opacity="0.028" stroke-width="1"/><line x1="-5.00" y1="472.04" x2="252.19" y2="777.00" stroke="#000" stroke-opacity="0.028" stroke-width="1"/><line x1="1025.00" y1="528.92" x2="830.48" y2="777.00" stroke="#000" stroke-opacity="0.028" stroke-width="1"/><line x1="-5.00" y1="528.41" x2="189.92" y2="777.00" stroke="#000" stroke-opacity="0.028" stroke-width="1"/><line x1="1025.00" y1="594.55" x2="892.75" y2="777.00" stroke="#000" stroke-opacity="0.028" stroke-width="1"/><line x1="-5.00" y1="594.00" x2="127.65" y2="777.00" stroke="#000" stroke-opacity="0.028" stroke-width="1"/><line x1="1025.00" y1="671.86" x2="955.01" y2="777.00" stroke="#000" stroke-opacity="0.028" stroke-width="1"/><line x1="-5.00" y1="671.26" x2="65.39" y2="777.00" stroke="#000" stroke-opacity="0.028" stroke-width="1"/><line x1="1025.00" y1="764.27" x2="1017.28" y2="777.00" stroke="#000" stroke-opacity="0.028" stroke-width="1"/><line x1="-5.00" y1="763.61" x2="3.12" y2="777.00" stroke="#000" stroke-opacity="0.028" stroke-width="1"/><line x1="72.96" y1="-5.00" x2="-5.00" y2="8.26" stroke="url(#g37)" stroke-width="1"/><line x1="947.44" y1="-5.00" x2="1025.00" y2="8.19" stroke="url(#g38)" stroke-width="1"/><line x1="232.34" y1="-5.00" x2="-5.00" y2="39.89" stroke="url(#g39)" stroke-width="1"/><line x1="788.06" y1="-5.00" x2="1025.00" y2="39.82" stroke="url(#g40)" stroke-width="1"/><line x1="391.73" y1="-5.00" x2="-5.00" y2="79.51" stroke="url(#g41)" stroke-width="1"/><line x1="628.67" y1="-5.00" x2="1025.00" y2="79.43" stroke="url(#g42)" stroke-width="1"/><line x1="551.11" y1="-5.00" x2="-5.00" y2="130.57" stroke="url(#g43)" stroke-width="1"/><line x1="469.29" y1="-5.00" x2="1025.00" y2="130.48" stroke="url(#g44)" stroke-width="1"/><line x1="710.49" y1="-5.00" x2="-5.00" y2="198.88" stroke="url(#g45)" stroke-width="1"/><line x1="309.91" y1="-5.00" x2="1025.00" y2="198.76" stroke="url(#g46)" stroke-width="1"/><line x1="869.88" y1="-5.00" x2="-5.00" y2="294.93" stroke="url(#g47)" stroke-width="1"/><line x1="150.52" y1="-5.00" x2="1025.00" y2="294.79" stroke="url(#g48)" stroke-width="1"/><line x1="1025.00" y1="-3.17" x2="-5.00" y2="439.94" stroke="url(#g49)" stroke-width="1"/><line x1="-5.00" y1="-3.34" x2="1025.00" y2="439.77" stroke="url(#g50)" stroke-width="1"/><line x1="1025.00" y1="278.46" x2="456.87" y2="777.00" stroke="url(#g51)" stroke-width="1"/><line x1="-5.00" y1="278.11" x2="563.53" y2="777.00" stroke="url(#g52)" stroke-width="1"/><line x1="-5.00" y1="89.25" x2="1025.00" y2="683.92" stroke="#8c1a26" stroke-opacity="0.950" stroke-width="1"/><line x1="1025.00" y1="89.48" x2="-5.00" y2="684.15" stroke="#26268e" stroke-opacity="0.950" stroke-width="1"/><g><line x1="510.20" y1="179.11" x2="723.48" y2="263.56" stroke="#ffff60" stroke-opacity="0.3" stroke-width="11.60" stroke-linecap="round"/><line x1="723.48" y1="263.56" x2="689.97" y2="490.49" stroke="#ffff60" stroke-opacity="0.3" stroke-width="11.70" stroke-linecap="round"/><line x1="689.97" y1="490.49" x2="510.20" y2="632.97" stroke="#ffff60" stroke-opacity="0.3" stroke-width="9.80" stroke-linecap="round"/><line x1="510.20" y1="632.97" x2="330.43" y2="490.49" stroke="#ffff60" stroke-opacity="0.3" stroke-width="9.80" stroke-linecap="round"/><line x1="330.43" y1="490.49" x2="296.92" y2="263.56" stroke="#ffff60" stroke-opacity="0.3" stroke-width="11.70" stroke-linecap="round"/><line x1="296.92" y1="263.56" x2="510.20" y2="179.11" stroke="#ffff60" stroke-opacity="0.3" stroke-width="11.60" stroke-linecap="round"/></g><polygon points="510.20,179.11 723.48,263.56 689.97,490.49 510.20,632.97 330.43,490.49 296.92,263.56" fill="#ffff00"/><line x1="510.20" y1="179.11" x2="723.48" y2="263.56" stroke="#ffff00" stroke-width="9.20" stroke-linecap="round"/><line x1="723.48" y1="263.56" x2="689.97" y2="490.49" stroke="#ffff00" stroke-width="9.30" stroke-linecap="round"/><line x1="689.97" y1="490.49" x2="510.20" y2="632.97" stroke="#ffff00" stroke-width="7.40" stroke-linecap="round"/><line x1="510.20" y1="632.97" x2="330.43" y2="490.49" stroke="#ffff00" stroke-width="7.40" stroke-linecap="round"/><line x1="330.43" y1="490.49" x2="296.92" y2="263.56" stroke="#ffff00" stroke-width="9.30" stroke-linecap="round"/><line x1="296.92" y1="263.56" x2="510.20" y2="179.11" stroke="#ffff00" stroke-width="9.20" stroke-linecap="round"/><polygon points="510.20,179.11 723.48,263.56 689.97,490.49 510.20,632.97 330.43,490.49 296.92,263.56" fill="#a8a8a8"/><polygon points="510.20,179.11 723.48,263.56 510.20,386.70 296.92,263.56" fill="url(#ftop)"/><polygon points="296.92,263.56 510.20,386.70 510.20,632.97 330.43,490.49" fill="url(#fleft)"/><polygon points="510.20,386.70 723.48,263.56 689.97,490.49 510.20,632.97" fill="url(#fright)"/><g clip-path="url(#silclip)"><line x1="-0.05" y1="167.64" x2="-5.00" y2="168.96" stroke="#000" stroke-opacity="0.018" stroke-width="1"/><line x1="1020.45" y1="167.64" x2="1025.00" y2="168.86" stroke="#000" stroke-opacity="0.018" stroke-width="1"/><line x1="7.28" y1="172.75" x2="-5.00" y2="176.08" stroke="#000" stroke-opacity="0.018" stroke-width="1"/><line x1="1013.12" y1="172.75" x2="1025.00" y2="175.97" stroke="#000" stroke-opacity="0.018" stroke-width="1"/><line x1="14.79" y1="177.98" x2="-5.00" y2="183.43" stroke="#000" stroke-opacity="0.018" stroke-width="1"/><line x1="1005.61" y1="177.98" x2="1025.00" y2="183.32" stroke="#000" stroke-opacity="0.018" stroke-width="1"/><line x1="22.47" y1="183.33" x2="-5.00" y2="191.03" stroke="#000" stroke-opacity="0.019" stroke-width="1"/><line x1="997.93" y1="183.33" x2="1025.00" y2="190.91" stroke="#000" stroke-opacity="0.019" stroke-width="1"/><line x1="38.40" y1="194.42" x2="-5.00" y2="207.00" stroke="#000" stroke-opacity="0.020" stroke-width="1"/><line x1="982.00" y1="194.42" x2="1025.00" y2="206.88" stroke="#000" stroke-opacity="0.019" stroke-width="1"/><line x1="46.65" y1="200.17" x2="-5.00" y2="215.40" stroke="#000" stroke-opacity="0.020" stroke-width="1"/><line x1="973.75" y1="200.17" x2="1025.00" y2="215.28" stroke="#000" stroke-opacity="0.020" stroke-width="1"/><line x1="55.11" y1="206.06" x2="-5.00" y2="224.11" stroke="#000" stroke-opacity="0.020" stroke-width="1"/><line x1="965.29" y1="206.06" x2="1025.00" y2="223.99" stroke="#000" stroke-opacity="0.020" stroke-width="1"/><line x1="63.79" y1="212.10" x2="-5.00" y2="233.12" stroke="#000" stroke-opacity="0.021" stroke-width="1"/><line x1="956.61" y1="212.10" x2="1025.00" y2="233.00" stroke="#000" stroke-opacity="0.021" stroke-width="1"/><line x1="72.68" y1="218.30" x2="-5.00" y2="242.48" stroke="#000" stroke-opacity="0.021" stroke-width="1"/><line x1="947.72" y1="218.30" x2="1025.00" y2="242.35" stroke="#000" stroke-opacity="0.021" stroke-width="1"/><line x1="81.81" y1="224.65" x2="-5.00" y2="252.18" stroke="#000" stroke-opacity="0.021" stroke-width="1"/><line x1="938.59" y1="224.65" x2="1025.00" y2="252.05" stroke="#000" stroke-opacity="0.021" stroke-width="1"/><line x1="91.17" y1="231.18" x2="-5.00" y2="262.25" stroke="#000" stroke-opacity="0.022" stroke-width="1"/><line x1="929.23" y1="231.18" x2="1025.00" y2="262.12" stroke="#000" stroke-opacity="0.022" stroke-width="1"/><line x1="100.78" y1="237.87" x2="-5.00" y2="272.72" stroke="#000" stroke-opacity="0.022" stroke-width="1"/><line x1="919.62" y1="237.87" x2="1025.00" y2="272.59" stroke="#000" stroke-opacity="0.022" stroke-width="1"/><line x1="110.65" y1="244.74" x2="-5.00" y2="283.60" stroke="#000" stroke-opacity="0.022" stroke-width="1"/><line x1="909.75" y1="244.74" x2="1025.00" y2="283.47" stroke="#000" stroke-opacity="0.022" stroke-width="1"/><line x1="131.21" y1="259.06" x2="-5.00" y2="306.72" stroke="#000" stroke-opacity="0.023" stroke-width="1"/><line x1="889.19" y1="259.06" x2="1025.00" y2="306.58" stroke="#000" stroke-opacity="0.023" stroke-width="1"/><line x1="141.92" y1="266.52" x2="-5.00" y2="319.02" stroke="#000" stroke-opacity="0.023" stroke-width="1"/><line x1="878.48" y1="266.52" x2="1025.00" y2="318.87" stroke="#000" stroke-opacity="0.023" stroke-width="1"/><line x1="152.93" y1="274.19" x2="-5.00" y2="331.84" stroke="#000" stroke-opacity="0.024" stroke-width="1"/><line x1="867.47" y1="274.19" x2="1025.00" y2="331.70" stroke="#000" stroke-opacity="0.024" stroke-width="1"/><line x1="164.26" y1="282.08" x2="-5.00" y2="345.24" stroke="#000" stroke-opacity="0.024" stroke-width="1"/><line x1="856.14" y1="282.08" x2="1025.00" y2="345.09" stroke="#000" stroke-opacity="0.024" stroke-width="1"/><line x1="175.92" y1="290.20" x2="-5.00" y2="359.24" stroke="#000" stroke-opacity="0.024" stroke-width="1"/><line x1="844.48" y1="290.20" x2="1025.00" y2="359.08" stroke="#000" stroke-opacity="0.024" stroke-width="1"/><line x1="187.93" y1="298.56" x2="-5.00" y2="373.88" stroke="#000" stroke-opacity="0.025" stroke-width="1"/><line x1="832.47" y1="298.56" x2="1025.00" y2="373.73" stroke="#000" stroke-opacity="0.025" stroke-width="1"/><line x1="200.30" y1="307.18" x2="-5.00" y2="389.22" stroke="#000" stroke-opacity="0.025" stroke-width="1"/><line x1="820.10" y1="307.18" x2="1025.00" y2="389.06" stroke="#000" stroke-opacity="0.025" stroke-width="1"/><line x1="213.04" y1="316.06" x2="-5.00" y2="405.31" stroke="#000" stroke-opacity="0.025" stroke-width="1"/><line x1="807.36" y1="316.06" x2="1025.00" y2="405.14" stroke="#000" stroke-opacity="0.025" stroke-width="1"/><line x1="226.19" y1="325.21" x2="-5.00" y2="422.19" stroke="#000" stroke-opacity="0.026" stroke-width="1"/><line x1="794.21" y1="325.21" x2="1025.00" y2="422.02" stroke="#000" stroke-opacity="0.026" stroke-width="1"/><line x1="253.73" y1="344.39" x2="-5.00" y2="458.61" stroke="#000" stroke-opacity="0.026" stroke-width="1"/><line x1="766.67" y1="344.39" x2="1025.00" y2="458.43" stroke="#000" stroke-opacity="0.026" stroke-width="1"/><line x1="268.18" y1="354.45" x2="-5.00" y2="478.29" stroke="#000" stroke-opacity="0.027" stroke-width="1"/><line x1="752.22" y1="354.45" x2="1025.00" y2="478.10" stroke="#000" stroke-opacity="0.027" stroke-width="1"/><line x1="283.10" y1="364.85" x2="-5.00" y2="499.05" stroke="#000" stroke-opacity="0.027" stroke-width="1"/><line x1="737.30" y1="364.85" x2="1025.00" y2="498.86" stroke="#000" stroke-opacity="0.027" stroke-width="1"/><line x1="298.52" y1="375.59" x2="-5.00" y2="520.99" stroke="#000" stroke-opacity="0.027" stroke-width="1"/><line x1="721.88" y1="375.59" x2="1025.00" y2="520.80" stroke="#000" stroke-opacity="0.027" stroke-width="1"/><line x1="314.48" y1="386.70" x2="-5.00" y2="544.21" stroke="#000" stroke-opacity="0.027" stroke-width="1"/><line x1="705.92" y1="386.70" x2="1025.00" y2="544.01" stroke="#000" stroke-opacity="0.027" stroke-width="1"/><line x1="330.98" y1="398.20" x2="-5.00" y2="568.83" stroke="#000" stroke-opacity="0.028" stroke-width="1"/><line x1="689.42" y1="398.20" x2="1025.00" y2="568.63" stroke="#000" stroke-opacity="0.028" stroke-width="1"/><line x1="348.07" y1="410.10" x2="-5.00" y2="594.98" stroke="#000" stroke-opacity="0.028" stroke-width="1"/><line x1="672.33" y1="410.10" x2="1025.00" y2="594.77" stroke="#000" stroke-opacity="0.028" stroke-width="1"/><line x1="365.78" y1="422.43" x2="-5.00" y2="622.80" stroke="#000" stroke-opacity="0.028" stroke-width="1"/><line x1="654.62" y1="422.43" x2="1025.00" y2="622.58" stroke="#000" stroke-opacity="0.028" stroke-width="1"/><line x1="384.14" y1="435.22" x2="-5.00" y2="652.46" stroke="#000" stroke-opacity="0.028" stroke-width="1"/><line x1="636.26" y1="435.22" x2="1025.00" y2="652.24" stroke="#000" stroke-opacity="0.028" stroke-width="1"/><line x1="422.96" y1="462.25" x2="-5.00" y2="718.09" stroke="#000" stroke-opacity="0.028" stroke-width="1"/><line x1="597.44" y1="462.25" x2="1025.00" y2="717.85" stroke="#000" stroke-opacity="0.028" stroke-width="1"/><line x1="443.50" y1="476.56" x2="-5.00" y2="754.51" stroke="#000" stroke-opacity="0.028" stroke-width="1"/><line x1="576.90" y1="476.56" x2="1025.00" y2="754.27" stroke="#000" stroke-opacity="0.028" stroke-width="1"/><line x1="464.85" y1="491.43" x2="20.99" y2="777.00" stroke="#000" stroke-opacity="0.028" stroke-width="1"/><line x1="555.55" y1="491.43" x2="999.41" y2="777.00" stroke="#000" stroke-opacity="0.028" stroke-width="1"/><line x1="487.07" y1="506.90" x2="83.25" y2="777.00" stroke="#000" stroke-opacity="0.028" stroke-width="1"/><line x1="533.33" y1="506.90" x2="937.15" y2="777.00" stroke="#000" stroke-opacity="0.028" stroke-width="1"/><line x1="510.20" y1="523.02" x2="145.52" y2="777.00" stroke="#000" stroke-opacity="0.028" stroke-width="1"/><line x1="510.20" y1="523.02" x2="874.88" y2="777.00" stroke="#000" stroke-opacity="0.028" stroke-width="1"/><line x1="1025.00" y1="183.35" x2="207.79" y2="777.00" stroke="#000" stroke-opacity="0.026" stroke-width="1"/><line x1="-5.00" y1="183.06" x2="812.61" y2="777.00" stroke="#000" stroke-opacity="0.026" stroke-width="1"/><line x1="1025.00" y1="203.92" x2="270.06" y2="777.00" stroke="#000" stroke-opacity="0.026" stroke-width="1"/><line x1="-5.00" y1="203.61" x2="750.34" y2="777.00" stroke="#000" stroke-opacity="0.026" stroke-width="1"/><line x1="1025.00" y1="226.42" x2="332.33" y2="777.00" stroke="#000" stroke-opacity="0.026" stroke-width="1"/><line x1="-5.00" y1="226.11" x2="688.07" y2="777.00" stroke="#000" stroke-opacity="0.026" stroke-width="1"/><line x1="1025.00" y1="251.16" x2="394.60" y2="777.00" stroke="#000" stroke-opacity="0.026" stroke-width="1"/><line x1="-5.00" y1="250.82" x2="625.80" y2="777.00" stroke="#000" stroke-opacity="0.026" stroke-width="1"/><line x1="1025.00" y1="308.76" x2="519.13" y2="777.00" stroke="#000" stroke-opacity="0.027" stroke-width="1"/><line x1="-5.00" y1="308.39" x2="501.27" y2="777.00" stroke="#000" stroke-opacity="0.027" stroke-width="1"/><line x1="1025.00" y1="342.57" x2="581.40" y2="777.00" stroke="#000" stroke-opacity="0.027" stroke-width="1"/><line x1="-5.00" y1="342.18" x2="439.00" y2="777.00" stroke="#000" stroke-opacity="0.027" stroke-width="1"/><line x1="1025.00" y1="380.55" x2="643.67" y2="777.00" stroke="#000" stroke-opacity="0.028" stroke-width="1"/><line x1="-5.00" y1="380.13" x2="376.73" y2="777.00" stroke="#000" stroke-opacity="0.028" stroke-width="1"/><line x1="1025.00" y1="423.51" x2="705.94" y2="777.00" stroke="#000" stroke-opacity="0.028" stroke-width="1"/><line x1="-5.00" y1="423.07" x2="314.46" y2="777.00" stroke="#000" stroke-opacity="0.028" stroke-width="1"/><line x1="1025.00" y1="472.52" x2="768.21" y2="777.00" stroke="#000" stroke-opacity="0.028" stroke-width="1"/><line x1="-5.00" y1="472.04" x2="252.19" y2="777.00" stroke="#000" stroke-opacity="0.028" stroke-width="1"/><line x1="1025.00" y1="528.92" x2="830.48" y2="777.00" stroke="#000" stroke-opacity="0.028" stroke-width="1"/><line x1="-5.00" y1="528.41" x2="189.92" y2="777.00" stroke="#000" stroke-opacity="0.028" stroke-width="1"/><line x1="1025.00" y1="594.55" x2="892.75" y2="777.00" stroke="#000" stroke-opacity="0.028" stroke-width="1"/><line x1="-5.00" y1="594.00" x2="127.65" y2="777.00" stroke="#000" stroke-opacity="0.028" stroke-width="1"/><line x1="1025.00" y1="671.86" x2="955.01" y2="777.00" stroke="#000" stroke-opacity="0.028" stroke-width="1"/><line x1="-5.00" y1="671.26" x2="65.39" y2="777.00" stroke="#000" stroke-opacity="0.028" stroke-width="1"/><line x1="1025.00" y1="764.27" x2="1017.28" y2="777.00" stroke="#000" stroke-opacity="0.028" stroke-width="1"/><line x1="-5.00" y1="763.61" x2="3.12" y2="777.00" stroke="#000" stroke-opacity="0.028" stroke-width="1"/><line x1="30.34" y1="188.81" x2="-5.00" y2="198.88" stroke="#3a3a3a" stroke-opacity="0.770" stroke-width="1"/><line x1="990.06" y1="188.81" x2="1025.00" y2="198.76" stroke="#3a3a3a" stroke-opacity="0.770" stroke-width="1"/><line x1="120.79" y1="251.80" x2="-5.00" y2="294.93" stroke="#3a3a3a" stroke-opacity="0.770" stroke-width="1"/><line x1="899.61" y1="251.80" x2="1025.00" y2="294.79" stroke="#3a3a3a" stroke-opacity="0.770" stroke-width="1"/><line x1="239.74" y1="334.65" x2="-5.00" y2="439.94" stroke="url(#g53)" stroke-width="1"/><line x1="780.66" y1="334.65" x2="1025.00" y2="439.77" stroke="url(#g54)" stroke-width="1"/><line x1="1025.00" y1="278.46" x2="456.87" y2="777.00" stroke="url(#g55)" stroke-width="1"/><line x1="-5.00" y1="278.11" x2="563.53" y2="777.00" stroke="url(#g56)" stroke-width="1"/><line x1="617.21" y1="448.48" x2="1025.00" y2="683.92" stroke="#8c1a26" stroke-opacity="0.950" stroke-width="1"/><line x1="403.19" y1="448.48" x2="-5.00" y2="684.15" stroke="#26268e" stroke-opacity="0.950" stroke-width="1"/></g></svg>
  <div class="vbtn" style="left:15px;width:28px">
    <svg class="abs" style="left:0;top:0" width="28" height="28"><circle cx="7.6" cy="13" r="1.55" fill="#333"/><circle cx="13.1" cy="13" r="1.55" fill="#333"/><circle cx="18.6" cy="13" r="1.55" fill="#333"/></svg>
  </div>
  <div class="vbtn" style="left:53px;width:28px">
    <svg class="abs" style="left:0;top:0" width="28" height="28"><g fill="none" stroke="#333" stroke-width="1.3" stroke-linecap="round"><path d="M6.8 10.6 V7.8 Q6.8 6.8 7.8 6.8 H10.6 M15.4 6.8 H18.2 Q19.2 6.8 19.2 7.8 V10.6 M19.2 15.4 V18.2 Q19.2 19.2 18.2 19.2 H15.4 M10.6 19.2 H7.8 Q6.8 19.2 6.8 18.2 V15.4"/></g></svg>
  </div>
  <div class="vbtn" style="left:91px;width:155px">
    <svg class="abs" style="left:0;top:0" width="28" height="28"><g fill="none" stroke="#333" stroke-width="1.1"><path d="M8.5 12 H17.3 V19 H8.5 Z"/><path d="M17.3 14 L21.3 13 L21.3 18.4 L17.3 17.6"/><circle cx="10.4" cy="9.6" r="2.1"/><circle cx="16" cy="9.1" r="2.6"/></g></svg>
    <div class="abs" style="left:30px;top:5px;font-size:13px;color:#555;white-space:nowrap;letter-spacing:-0.4px">Perspective Camera</div>
  </div>
</div>
<div id="vborder"></div>
</body></html>
